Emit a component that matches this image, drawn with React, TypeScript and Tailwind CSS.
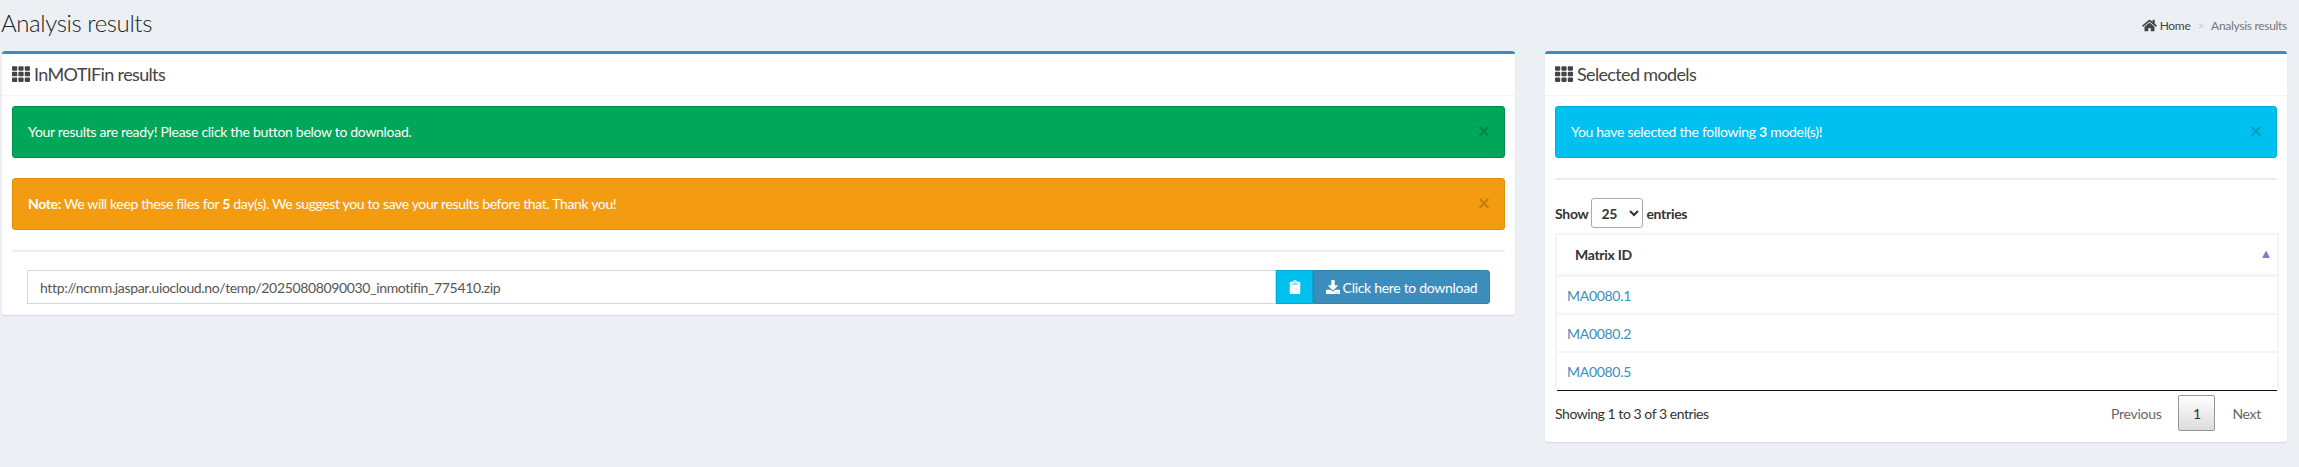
import { FaTh, FaHome, FaClipboard, FaDownload } from "react-icons/fa";

function Alert({ color, children }: { color: string; children: React.ReactNode }) {
  return (
    <div className={`relative h-[52px] rounded-[3px] border px-[15px] text-[14px] leading-[50px] text-white ${color}`}>
      {children}
      <span className="absolute right-[14px] top-[9px] text-[22px] leading-[30px] font-bold text-black/20">×</span>
    </div>
  );
}

function BoxHeader({ title }: { title: string }) {
  return (
    <div className="flex h-[42px] items-center gap-[4px] border-b border-[#f4f4f4] px-[10px] pb-[1px] text-[18px] text-[#444]">
      <FaTh className="h-[18px] w-[18px]" />
      <h3 className="tracking-[-0.65px]">{title}</h3>
    </div>
  );
}

export default function App() {
  const rows = ["MA0080.1", "MA0080.2", "MA0080.5"];
  return (
    <div className="h-[467px] bg-[#ecf0f5] pl-[2px] pr-[12px] font-['Lato',sans-serif] text-[#333] tracking-[-0.3px]">
      <div className="flex h-[51px] items-center justify-between pb-[5px]">
        <h1 className="-ml-[1px] text-[24px] font-light tracking-[-0.4px] text-[#222]">Analysis results</h1>
        <div className="flex items-center pt-[5px] text-[12px]">
          <FaHome className="mr-[3px] h-[15px] w-[15px] text-[#444]" />
          <span className="text-[#444]">Home</span>
          <span className="mx-[7px] text-[#ccc]">&gt;</span>
          <span className="text-[#777]">Analysis results</span>
        </div>
      </div>

      <div className="flex items-start gap-[30px]">
        <div className="h-[264px] w-[1513px] rounded-[3px] border-t-[3px] border-[#3c8dbc] bg-white shadow-[0_1px_1px_rgba(0,0,0,0.1)]">
          <BoxHeader title="InMOTIFin results" />
          <div className="p-[10px]">
            <Alert color="bg-[#00a65a] border-[#008d4c]">Your results are ready! Please click the button below to download.</Alert>
            <div className="mt-[20px] tracking-[-0.36px]">
              <Alert color="bg-[#f39c12] border-[#e08e0b]">
                <b>Note:</b> We will keep these files for <b>5</b> day(s). We suggest you to save your results before that. Thank you!
              </Alert>
            </div>
            <hr className="mt-[20px] border-t-2 border-[#eee]" />
            <div className="mt-[18px] flex px-[15px]">
              <input
                readOnly
                value="http://ncmm.jaspar.uiocloud.no/temp/20250808090030_inmotifin_775410.zip"
                className="h-[34px] min-w-0 flex-1 border border-[#d2d6de] px-[12px] text-[14px] tracking-[-0.35px] text-[#555] outline-none"
              />
              <button className="flex h-[34px] w-[37px] items-center justify-center border border-[#00acd6] bg-[#00c0ef] text-white">
                <FaClipboard className="h-[14px] w-[12px]" />
              </button>
              <button className="flex h-[34px] w-[177px] items-center justify-center gap-[3px] rounded-r-[3px] border border-[#367fa9] bg-[#3c8dbc] text-[14px] text-white">
                <FaDownload className="h-[14px] w-[14px]" />
                Click here to download
              </button>
            </div>
          </div>
        </div>

        <div className="h-[391px] w-[742px] rounded-[3px] border-t-[3px] border-[#3c8dbc] bg-white shadow-[0_1px_1px_rgba(0,0,0,0.1)]">
          <BoxHeader title="Selected models" />
          <div className="p-[10px]">
            <Alert color="bg-[#00c0ef] border-[#00acd6]">
              You have selected the following <b>3</b> model(s)!
            </Alert>
            <hr className="mt-[20px] border-t-2 border-[#eee]" />
            <div className="mt-[18px] flex h-[30px] items-center gap-[3px] text-[14px] font-bold">
              <span>Show</span>
              <select className="h-[30px] w-[52px] rounded-[3px] border border-[#aaa] bg-white px-[5px] text-[14px] font-bold">
                <option>25</option>
              </select>
              <span>entries</span>
            </div>
            <table className="mt-[5px] w-[724px] border-separate border-spacing-0 border-2 border-b-0 border-[#f4f4f4] text-[14px]">
              <thead>
                <tr>
                  <th className="relative h-[42px] border-b-[3px] border-[#f4f4f4] pl-[18px] text-left font-bold">
                    Matrix ID
                    <span className="absolute right-[5px] top-[9px] text-[13px] text-[#7b7bd6]">▲</span>
                  </th>
                </tr>
              </thead>
              <tbody>
                {rows.map((id, i) => (
                  <tr key={id}>
                    <td className={`h-[38px] pl-[10px] text-[#3c8dbc] ${i < 2 ? "border-b-2 border-[#f4f4f4]" : "border-b border-[#111]"}`}>
                      {id}
                    </td>
                  </tr>
                ))}
              </tbody>
            </table>
            <div className="mt-[4px] flex items-center justify-between text-[14px]">
              <span className="tracking-[-0.45px]">Showing 1 to 3 of 3 entries</span>
              <div className="flex items-center text-[#666]">
                <span>Previous</span>
                <span className="ml-[17px] flex h-[36px] w-[37px] items-center justify-center rounded-[2px] border border-[#979797] bg-gradient-to-b from-white to-[#dcdcdc] text-[#333]">1</span>
                <span className="ml-[17px] mr-[16px]">Next</span>
              </div>
            </div>
          </div>
        </div>
      </div>
    </div>
  );
}
